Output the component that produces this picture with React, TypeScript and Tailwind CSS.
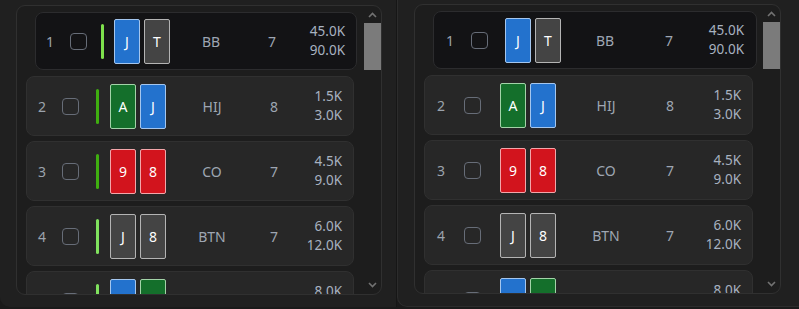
import React from "react";

type CardColor = "blue" | "gray" | "green" | "red";

const cardCls: Record<CardColor, string> = {
  blue: "bg-[#2372cd] border-[#a4c6ee]",
  gray: "bg-[#444444] border-[#b4b4b4]",
  green: "bg-[#146f2b] border-[#a3d3a8]",
  red: "bg-[#d2141d] border-[#f2a6aa]",
};

function Card({ c, label }: { c: CardColor; label: string }) {
  return (
    <div
      className={`w-[26px] h-[45px] shrink-0 rounded-[2px] border flex items-center justify-center text-white text-[14px] ${cardCls[c]}`}
    >
      {label}
    </div>
  );
}

type Layout = {
  row: string; // width, margin, height
  num: string;
  cb: string;
  bar: string;
  cards: string;
  pos: string;
  cnt: string;
  val: string;
};

type RowData = {
  n: number;
  cards: [CardColor, string][];
  pos: string;
  cnt: string;
  v1: string;
  v2: string;
  bar: string;
  sel?: boolean;
};

function Row({ d, l, showBar }: { d: RowData; l: Layout; showBar: boolean }) {
  return (
    <div
      className={`shrink-0 flex items-center rounded-[8px] border ${
        d.sel ? "bg-[#131315] border-[#2c2c2e]" : "bg-[#272727] border-[#303030]"
      } ${l.row}`}
    >
      <div className={`w-[20px] text-center text-[14px] text-[#9ba3ad] ${l.num}`}>{d.n}</div>
      <div className={`w-[17px] h-[17px] shrink-0 rounded-[4px] border-[1.5px] border-[#676d78] ${l.cb}`} />
      {showBar && <div className={`w-[3px] h-[35px] shrink-0 rounded-full ${d.bar} ${l.bar}`} />}
      <div className={`flex gap-[4px] ${l.cards}`}>
        {d.cards.map(([c, t], i) => (
          <Card key={i} c={c} label={t} />
        ))}
      </div>
      <div className={`w-[60px] text-center text-[14px] text-[#9ea6b2] ${l.pos}`}>{d.pos}</div>
      <div className={`w-[30px] text-center text-[14px] text-[#9ea6b2] ${l.cnt}`}>{d.cnt}</div>
      <div className={`ml-auto text-right text-[13.5px] leading-[19px] text-[#a8b2c0] ${l.val}`}>
        <div>{d.v1}</div>
        <div>{d.v2}</div>
      </div>
    </div>
  );
}

const rows: RowData[] = [
  { n: 1, cards: [["blue", "J"], ["gray", "T"]], pos: "BB", cnt: "7", v1: "45.0K", v2: "90.0K", bar: "bg-[#7ee04c]", sel: true },
  { n: 2, cards: [["green", "A"], ["blue", "J"]], pos: "HIJ", cnt: "8", v1: "1.5K", v2: "3.0K", bar: "bg-[#3fae10]" },
  { n: 3, cards: [["red", "9"], ["red", "8"]], pos: "CO", cnt: "7", v1: "4.5K", v2: "9.0K", bar: "bg-[#3fae10]" },
  { n: 4, cards: [["gray", "J"], ["gray", "8"]], pos: "BTN", cnt: "7", v1: "6.0K", v2: "12.0K", bar: "bg-[#80e25e]" },
  { n: 5, cards: [["blue", "K"], ["green", "Q"]], pos: "SB", cnt: "7", v1: "8.0K", v2: "16.0K", bar: "bg-[#80e25e]" },
];

const leftFirst: Layout = {
  row: "w-[322px] h-[58px] ml-[18px] mt-[6px]",
  num: "ml-[4px]",
  cb: "ml-[10px]",
  bar: "ml-[14px]",
  cards: "ml-[10px]",
  pos: "ml-[11px]",
  cnt: "ml-[16px]",
  val: "mr-[11px]",
};
const leftOther: Layout = {
  row: "w-[328px] h-[60px] ml-[9px]",
  num: "ml-[5px]",
  cb: "ml-[10px]",
  bar: "ml-[17px]",
  cards: "ml-[11px]",
  pos: "ml-[16px]",
  cnt: "ml-[17px]",
  val: "mr-[11px]",
};
const rightFirst: Layout = {
  row: "w-[324px] h-[58px] ml-[18px] mt-[6px]",
  num: "ml-[6px]",
  cb: "ml-[11px]",
  bar: "",
  cards: "ml-[17px]",
  pos: "ml-[14px]",
  cnt: "ml-[19px]",
  val: "mr-[12px]",
};
const rightOther: Layout = {
  row: "w-[329px] h-[60px] ml-[9px]",
  num: "ml-[6px]",
  cb: "ml-[13px]",
  bar: "",
  cards: "ml-[19px]",
  pos: "ml-[20px]",
  cnt: "ml-[19px]",
  val: "mr-[11px]",
};

function Chevron({ up }: { up: boolean }) {
  return (
    <svg width="9" height="6" viewBox="0 0 9 6">
      <polyline
        points={up ? "1,5 4.5,1.5 8,5" : "1,1 4.5,4.5 8,1"}
        fill="none"
        stroke="#727272"
        strokeWidth="1.6"
      />
    </svg>
  );
}

function Scrollbar() {
  return (
    <div className="w-[17px] shrink-0 flex flex-col">
      <div className="h-[17px] flex items-center justify-center">
        <Chevron up />
      </div>
      <div className="h-[47px] bg-[#7b7b7b]" />
      <div className="flex-1" />
      <div className="h-[17px] flex items-start justify-center pt-[5px]">
        <Chevron up={false} />
      </div>
    </div>
  );
}

function Box({ showBar, first, other, w }: { showBar: boolean; first: Layout; other: Layout; w: string }) {
  return (
    <div className={`h-[290px] ${w} rounded-[9px] border border-[#303030] bg-[#1d1d1d] flex overflow-hidden`}>
      <div className="flex-1 overflow-hidden flex flex-col">
        {rows.map((r, i) => (
          <div key={i} className={i === 0 ? "" : i === 1 ? "mt-[6px]" : "mt-[5px]"}>
            <Row d={r} l={i === 0 ? first : other} showBar={showBar} />
          </div>
        ))}
      </div>
      <Scrollbar />
    </div>
  );
}

export default function App() {
  return (
    <div
      className="w-[799px] h-[309px] bg-[#1a1a1a] flex overflow-hidden"
      style={{ fontFamily: '"Noto Sans", "Open Sans", sans-serif' }}
    >
      <div className="w-[396px] h-[307px] shrink-0 bg-[#202020] rounded-bl-[10px] pl-[16px] pt-[5px]">
        <Box showBar first={leftFirst} other={leftOther} w="w-[366px]" />
      </div>
      <div className="w-[1px] h-[307px] bg-[#161616] shrink-0" />
      <div className="w-[402px] h-[307px] shrink-0 bg-[#202020] rounded-bl-[10px] border-l border-b border-[#2c2c2c] pl-[16px] pt-[4px]">
        <Box showBar={false} first={rightFirst} other={rightOther} w="w-[367px]" />
      </div>
    </div>
  );
}
